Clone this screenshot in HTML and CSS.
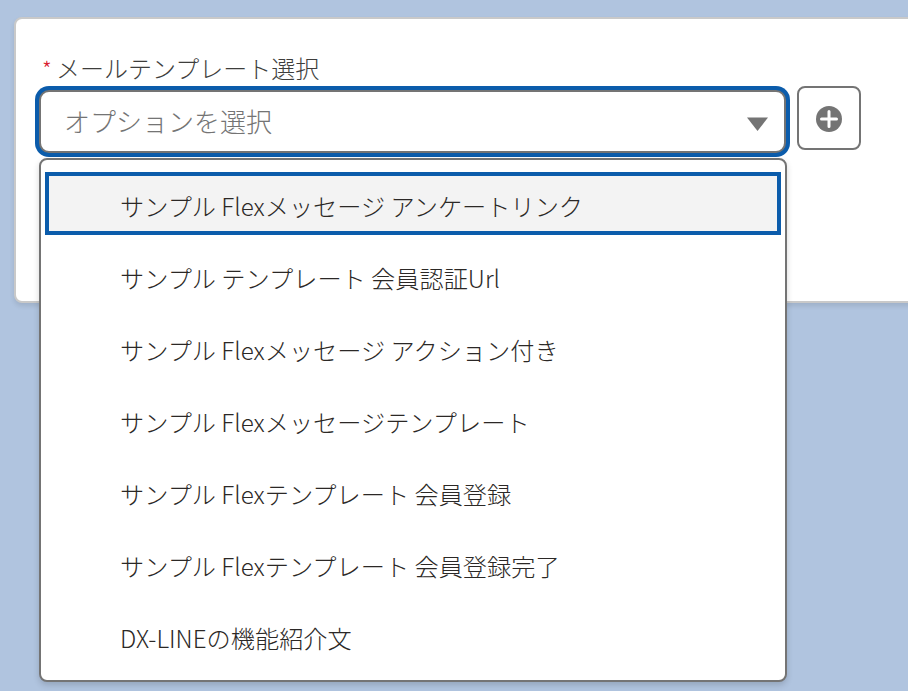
FILE: index.html
```html
<!DOCTYPE html>
<html lang="ja">
<head>
    <meta charset="UTF-8">
    <meta name="viewport" content="width=device-width, initial-scale=1.0">
    <link rel="stylesheet" href="styles.css">
</head>
<body>

<div class="card">
    <label class="field-label"><span class="required">*</span>メールテンプレート選択</label>
    <div class="field-row">
        <div class="combobox">
            <div class="combo-input">
                <span class="placeholder">オプションを選択</span>
                <svg class="combo-arrow" width="21" height="14" viewBox="0 0 21 14"><path d="M0 0.500h21L10.500 14z" fill="#747474"/></svg>
            </div>
            <!-- Dropdown list -->
            <ul class="dropdown">
                <li class="option option-active">サンプル Flexメッセージ アンケートリンク</li>
                <li class="option">サンプル テンプレート 会員認証Url</li>
                <li class="option">サンプル Flexメッセージ アクション付き</li>
                <li class="option">サンプル Flexメッセージテンプレート</li>
                <li class="option">サンプル Flexテンプレート 会員登録</li>
                <li class="option">サンプル Flexテンプレート 会員登録完了</li>
                <li class="option">DX-LINEの機能紹介文</li>
            </ul>
        </div>
        <button class="add-button" type="button">
            <svg width="26" height="26" viewBox="0 0 26 26"><circle cx="13" cy="13" r="13" fill="#747474"/><path d="M13 5.500v15M5.500 13h15" stroke="#fff" stroke-width="3" stroke-linecap="round"/></svg>
        </button>
    </div>
</div>

</body>
</html>
```
FILE: styles.css
```css
html, body {
  height: 100%;
}
body {
  margin: 0;
  padding: 17px 0 0 14px;
  box-sizing: border-box;
  overflow: hidden;
  background-color: #b0c4df;
  color: #2b2826;
  font-family: "Noto Sans CJK JP", "Noto Sans", sans-serif;
  font-weight: 300;
}
.card {
  box-sizing: border-box;
  width: 920px;
  height: 286px;
  padding: 32px 0 0 19px;
  background-color: #fff;
  border: 2px solid #c9c9c9;
  border-radius: 8px;
  box-shadow: 0 3px 5px rgba(0, 0, 0, 0.1);
}
.field-label {
  display: block;
  height: 35px;
  font-size: 24px;
  line-height: 33px;
  color: #3e3e3c;
}
.required {
  display: inline-block;
  width: 14px;
  margin-left: 7px;
  color: #d9202f;
  font-size: 22px;
}
.field-row {
  display: flex;
  align-items: flex-start;
  gap: 7px;
}
.combobox {
  position: relative;
  width: 755px;
}
.combo-input {
  box-sizing: border-box;
  display: flex;
  align-items: center;
  justify-content: space-between;
  width: 747px;
  height: 63px;
  margin: 4px 0 0 4px;
  padding: 0 16px 0 23px;
  background-color: #fff;
  border: 2px solid #747474;
  border-radius: 10px;
  box-shadow: 0 0 0 4px #0b5cab;
}
.placeholder {
  font-size: 26px;
  line-height: 36px;
  margin-top: -2px;
  color: #747474;
}
.combo-arrow {
  margin-top: 4px;
}
.dropdown {
  position: absolute;
  top: 72px;
  left: 4px;
  width: 748px;
  height: 524px;
  box-sizing: border-box;
  margin: 0;
  padding: 12px 4px 0 4px;
  list-style: none;
  background-color: #fff;
  border: 2px solid #747474;
  border-radius: 8px;
  box-shadow: 0 3px 6px rgba(0, 0, 0, 0.16);
}
.option {
  box-sizing: border-box;
  height: 72px;
  padding-left: 75px;
  font-size: 24.2px;
  line-height: 68px;
}
.option-active {
  height: 63px;
  margin-bottom: 9px;
  padding-left: 71px;
  line-height: 60px;
  background-color: #f3f3f3;
  border: 4px solid #0b5cab;
}
.add-button {
  box-sizing: border-box;
  display: flex;
  align-items: center;
  justify-content: center;
  width: 64px;
  height: 64px;
  padding: 2px 0 0 0;
  background-color: #fff;
  border: 2px solid #747474;
  border-radius: 8px;
}
```
